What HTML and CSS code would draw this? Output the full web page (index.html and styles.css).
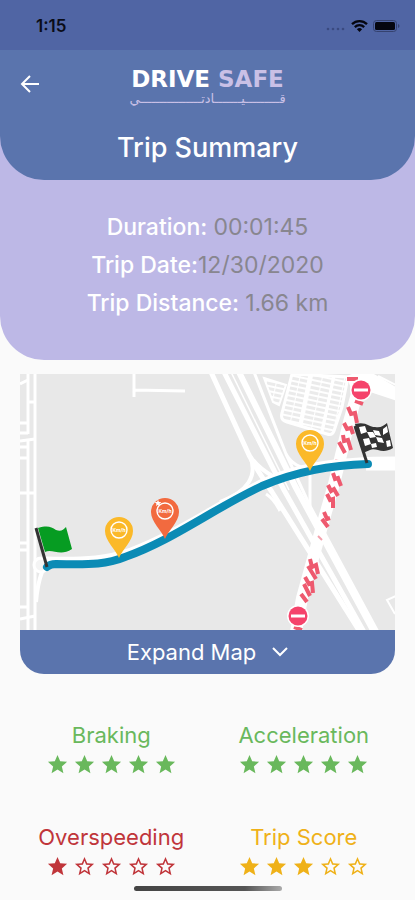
FILE: index.html
```
<!DOCTYPE html>
<html lang="en">
<head>
    <meta charset="UTF-8">
    <meta name="viewport" content="width=device-width, initial-scale=1.0">
    <title>Drive Safe - Trip Summary</title>
    <link rel="stylesheet" href="styles.css">
</head>
<body>
    <!-- Shared shapes -->
    <svg class="sprite" aria-hidden="true">
        <symbol id="star" viewBox="0 0 24 24">
            <path d="M12 17.27L18.18 21l-1.64-7.03L22 9.24l-7.19-.61L12 2 9.19 8.63 2 9.24l5.46 4.73L5.82 21z"/>
        </symbol>
        <symbol id="star-empty" viewBox="0 0 24 24">
            <path d="M22 9.24l-7.19-.62L12 2 9.19 8.63 2 9.24l5.46 4.73L5.82 21 12 17.27 18.18 21l-1.63-7.03L22 9.24zM12 15.4l-3.76 2.27 1-4.28-3.32-2.88 4.38-.38L12 6.1l1.71 4.04 4.38.38-3.32 2.88 1 4.28L12 15.4z"/>
        </symbol>
    </svg>

    <div class="summary">
        <header class="header">
            <div class="status-bar">
                <span class="time">1:15</span>
                <div class="status-icons">
                    <svg width="20" height="14" viewBox="0 0 20 14" fill="#3a4a80">
                        <circle cx="2" cy="10" r="1.3"/>
                        <circle cx="7" cy="10" r="1.3"/>
                        <circle cx="12" cy="10" r="1.3"/>
                        <circle cx="17" cy="10" r="1.3"/>
                    </svg>
                    <svg width="17" height="14" viewBox="0 0 17 14" fill="none" stroke="#05060f" stroke-width="2.3">
                        <path d="M1 5.2a10.8 10.8 0 0 1 15 0"/>
                        <path d="M3.8 8.1a6.8 6.8 0 0 1 9.4 0"/>
                        <path d="M8.5 13L5.9 10.3a3.8 3.8 0 0 1 5.2 0z" fill="#05060f" stroke="none"/>
                    </svg>
                    <svg width="27" height="14" viewBox="0 0 27 14">
                        <rect x="0.5" y="1.5" width="23" height="11" rx="3" fill="none" stroke="#35426f"/>
                        <rect x="2" y="3" width="20" height="8" rx="1.5" fill="#05060f"/>
                        <path d="M25 5v4q1.5-.6 1.5-2T25 5z" fill="#35426f"/>
                    </svg>
                </div>
            </div>
            <div class="app-bar">
                <a class="back" href="#" aria-label="Back">
                    <svg width="20" height="18" viewBox="0 0 20 18" fill="none" stroke="#fff" stroke-width="2">
                        <path d="M19 9H3M10 1L2 9l8 8"/>
                    </svg>
                </a>
                <div class="logo">
                    <div class="logo-name">DRIVE <span>SAFE</span></div>
                    <div class="logo-arabic" lang="ar" dir="rtl">قـــــــــيـــــــادتــــــــــــــــي</div>
                </div>
            </div>
            <h1>Trip Summary</h1>
        </header>
        <dl class="details">
            <div><dt>Duration: </dt><dd>00:01:45</dd></div>
            <div><dt>Trip Date:</dt><dd>12/30/2020</dd></div>
            <div><dt>Trip Distance: </dt><dd>1.66 km</dd></div>
        </dl>
    </div>

    <main>
        <section class="map-card">
            <svg class="map" viewBox="0 0 375 256" role="img" aria-label="Map of the trip route">
                <defs>
                    <pattern id="lots" width="22" height="5" patternUnits="userSpaceOnUse" patternTransform="rotate(12)">
                        <rect width="22" height="5" fill="#fff"/>
                        <rect x="1" y="1" width="9" height="3" fill="#ebebeb"/>
                        <rect x="11" y="1" width="9" height="3" fill="#ebebeb"/>
                    </pattern>
                    <symbol id="pin" viewBox="0 0 32 46">
                        <path d="M16 43C13 35 2 26 2 16a14 14 0 0 1 28 0c0 10-11 19-14 27z"/>
                        <circle cx="16" cy="15" r="8" fill="none" stroke="#fff" stroke-width="1.4"/>
                    </symbol>
                    <symbol id="closed" viewBox="0 0 22 22">
                        <circle cx="11" cy="11" r="11" fill="#fff"/>
                        <circle cx="11" cy="11" r="9.5" fill="#f5436b"/>
                        <rect x="4" y="9.5" width="14" height="3" fill="#fff"/>
                    </symbol>
                </defs>
                <rect width="375" height="256" fill="#e8e8e8"/>

                <!-- Side streets -->
                <g fill="none" stroke="#fff" stroke-width="3">
                    <path d="M8 0v60M8 66v190M15 0v256"/>
                    <path d="M0 10l8-4M8 28h7M0 49h8M0 59h8M0 67l15-2M0 73h8M0 84h8M0 119h15M0 169h8M0 176h8M0 233h8M0 245l15-3"/>
                    <path d="M114 0v23M114 16l51 1"/>
                    <path d="M376 222l-9 4 8 14" stroke-width="2"/>
                </g>
                <circle cx="21" cy="191" r="7" fill="#f4f4f4" stroke="#fff" stroke-width="3"/>
                <path d="M22 198c-3 8-5 18-6 30" fill="none" stroke="#fff" stroke-width="4"/>

                <!-- Parking lots -->
                <path d="M272 0l56 3-6 30-8 24q-2 5-7 3l-40-12q-7-2-5-9z" fill="url(#lots)" stroke="#fff" stroke-width="3"/>
                <path d="M244 4l22 7-7 20-6-3z" fill="url(#lots)" stroke="#fff" stroke-width="2"/>
                <path d="M290 0l-10 50M314 2l-12 54" stroke="#fff" stroke-width="3"/>

                <!-- Highway -->
                <g fill="none" stroke="#fff" stroke-linejoin="round">
                    <path d="M191-2l38 83q8 15 23 37l88 140" stroke-width="5"/>
                    <path d="M204-2l60 118 80 142" stroke-width="5"/>
                    <path d="M211-2l58 118" stroke-width="1.5"/>
                    <path d="M219-2l56 114 79 146" stroke-width="6"/>
                    <path d="M234-2l32 82q8 14 25 15M266 80l24 52 68 126" stroke-width="3"/>
                    <path d="M230 82q12 30-30 46M230 82q8 12 24 21" stroke-width="4"/>
                    <path d="M246 120q8 5 14 17M290 100v32" stroke-width="3"/>
                </g>

                <!-- Closed road -->
                <path d="M332 0l6 14 42 14V12L352-2z" fill="#fff"/>
                <path d="M354 0l22 13V0z" fill="#e8e8e8"/>
                <path d="M358 2l18 9" stroke="#fff" stroke-width="2"/>
                <path d="M332 0l6 16-9 32-15 62-12 42-20 72-6 34" fill="none" stroke="#fff" stroke-width="12"/>
                <g fill="none" stroke="#ee5a6f" stroke-width="4">
                    <path d="M327 5h11M335 27l8 3"/>
                    <path d="M328 33l3 7 4-1 2 10M324 49l3 6 4-1 2 6M323 61l1 6 4-1 3 10M319 68l6 11M315 87l7 2"/>
                    <path d="M313 99l2 6 3-1 3 8M308 111l3 6 3-2 4 7M307 120l3 6 3-1v9M304 138l3 7 3-1"/>
                    <path d="M302 145l6 8M290 185l2 8 4-2 2 9M288 192l8 13M285 203l4 7 3-1 1 10M284 210l6 12M281 220l6 8M274 253l8 3"/>
                </g>
                <path d="M298 162l4 4" stroke="#f4a0ac" stroke-width="2"/>

                <!-- Route -->
                <path d="M26 186c42 1 62-1 85-9 45-17 84-45 130-68 34-16 73-23 134-23" fill="none" stroke="#fff" stroke-width="7"/>
                <path d="M346 92h30" stroke="#fff" stroke-width="9"/>
                <path d="M27 193q3-3 9-3c37 1 52 0 69-7 48-17 86-47 137-71 33-14 66-21 106-22" fill="none" stroke="#0b8bb5" stroke-width="8" stroke-linecap="round"/>

                <!-- Start and finish flags -->
                <path d="M16 154l11 39" stroke="#333" stroke-width="3"/>
                <path d="M18 154c10-3 13-1 18 2 5 2 7 0 10-3l6 22c-12 8-20-1-27 3z" fill="#069c22"/>
                <path d="M335 52l12 37" stroke="#333" stroke-width="3"/>
                <path d="M335 50c11-3 14 3 20 3 6 1 8-1 12-4l6 25c-11 7-17-1-23 2l-7 3z" fill="#333"/>
                <g fill="#fff">
                    <path d="M339 53l6-1 2 6-6 2zM353 56l6 1 2 5-6-1zM363 55l4-3 1 6-5 3zM347 58l6 0 3 5-6 1zM343 65l6-1 2 6-6 2zM356 63l6 1 2 5-6-1zM351 70l5-1 1 4-5 1zM366 67l4-1 1 6-4 1z"/>
                </g>

                <!-- Events -->
                <g class="pin-label">
                    <use href="#pin" x="274" y="54" width="32" height="46" fill="#fbb929"/>
                    <text x="290" y="71">Km/h</text>
                    <use href="#pin" x="83" y="141" width="32" height="46" fill="#fbb929"/>
                    <text x="99" y="158">Km/h</text>
                    <use href="#pin" x="129" y="122" width="32" height="46" fill="#f26a3f"/>
                    <text x="145" y="139">Km/h</text>
                </g>
                <use href="#star" x="134" y="125" width="8" height="8" fill="#fff"/>
                <use href="#closed" x="330" y="5" width="22" height="22"/>
                <use href="#closed" x="267" y="231" width="22" height="22"/>
            </svg>
            <button class="expand" type="button">
                Expand Map
                <svg width="16" height="10" viewBox="0 0 16 10" fill="none" stroke="#fff" stroke-width="2">
                    <path d="M1 1l7 7 7-7"/>
                </svg>
            </button>
        </section>

        <section class="scores">
            <div class="score good">
                <h2>Braking</h2>
                <div class="stars" role="img" aria-label="5 out of 5">
                    <svg><use href="#star"/></svg>
                    <svg><use href="#star"/></svg>
                    <svg><use href="#star"/></svg>
                    <svg><use href="#star"/></svg>
                    <svg><use href="#star"/></svg>
                </div>
            </div>
            <div class="score good">
                <h2>Acceleration</h2>
                <div class="stars" role="img" aria-label="5 out of 5">
                    <svg><use href="#star"/></svg>
                    <svg><use href="#star"/></svg>
                    <svg><use href="#star"/></svg>
                    <svg><use href="#star"/></svg>
                    <svg><use href="#star"/></svg>
                </div>
            </div>
            <div class="score bad">
                <h2>Overspeeding</h2>
                <div class="stars" role="img" aria-label="1 out of 5">
                    <svg><use href="#star"/></svg>
                    <svg><use href="#star-empty"/></svg>
                    <svg><use href="#star-empty"/></svg>
                    <svg><use href="#star-empty"/></svg>
                    <svg><use href="#star-empty"/></svg>
                </div>
            </div>
            <div class="score average">
                <h2>Trip Score</h2>
                <div class="stars" role="img" aria-label="3 out of 5">
                    <svg><use href="#star"/></svg>
                    <svg><use href="#star"/></svg>
                    <svg><use href="#star"/></svg>
                    <svg><use href="#star-empty"/></svg>
                    <svg><use href="#star-empty"/></svg>
                </div>
            </div>
        </section>
    </main>

    <div class="home-indicator"></div>
</body>
</html>
```
FILE: styles.css
```
* {
    margin: 0;
    padding: 0;
    box-sizing: border-box;
}

body {
    font-family: Inter, "Open Sans", sans-serif;
    background: #fafafa;
    min-height: 100vh;
}

svg {
    display: block;
}

.sprite {
    position: absolute;
    width: 0;
    height: 0;
}

/* Header */
.summary {
    background: #bdb8e6;
    border-radius: 0 0 44px 44px;
}

.header {
    background: #5a74ad;
    border-radius: 0 0 44px 44px;
    color: #fff;
    text-align: center;
    padding-bottom: 8px;
}

.status-bar {
    display: flex;
    align-items: center;
    justify-content: space-between;
    height: 50px;
    padding: 2px 15px 0 36px;
    background: #5065a4;
}

.time {
    font-size: 17px;
    font-weight: 600;
    color: #0a0c18;
}

.status-icons {
    display: flex;
    align-items: center;
    gap: 5px;
}

.app-bar {
    display: grid;
    grid-template-columns: 32px 1fr 32px;
    align-items: center;
    height: 74px;
    padding: 0 20px;
}

.back {
    padding-bottom: 6px;
}

.logo {
    display: flex;
    flex-direction: column;
    align-items: center;
}

.logo-name {
    font: bold 23px/24px "DejaVu Sans", sans-serif;
}

.logo-name span {
    color: #c9c0e6;
}

.logo-arabic {
    font: 13px/16px "DejaVu Sans", sans-serif;
    color: #c9c0e6;
    white-space: nowrap;
}

h1 {
    font-size: 27px;
    font-weight: 500;
    line-height: 48px;
}

.details {
    padding: 28px 0 38px;
    font-size: 23px;
    line-height: 38px;
    text-align: center;
}

.details dt,
.details dd {
    display: inline;
    white-space: pre;
}

.details dt {
    color: #fff;
    font-weight: 500;
}

.details dd {
    color: #88868f;
}

/* Map */
.map-card {
    margin: 14px 20px 0;
    border-radius: 0 0 24px 24px;
    overflow: hidden;
}

.map {
    width: 100%;
    height: auto;
}

.pin-label text {
    font-size: 5px;
    font-weight: 700;
    text-anchor: middle;
    fill: #fff;
}

.expand {
    display: flex;
    align-items: center;
    justify-content: center;
    gap: 16px;
    width: 100%;
    height: 44px;
    border: 0;
    background: #5a74ad;
    color: #fff;
    font: 22px/28px Inter, "Open Sans", sans-serif;
    cursor: pointer;
}

/* Scores */
.scores {
    display: grid;
    grid-template-columns: 1fr 1fr;
    row-gap: 46px;
    padding: 46px 15px 18px;
}

.score {
    display: flex;
    flex-direction: column;
    align-items: center;
}

.score h2 {
    font-size: 22px;
    font-weight: 400;
    line-height: 30px;
}

.stars {
    display: flex;
    gap: 4px;
    margin-top: 3px;
}

.stars svg {
    width: 23px;
    height: 23px;
    fill: currentColor;
}

.good {
    color: #69b85c;
}

.bad {
    color: #c0353a;
}

.average {
    color: #efb118;
}

.home-indicator {
    position: fixed;
    bottom: 9px;
    left: 50%;
    width: 148px;
    height: 5px;
    border-radius: 3px;
    background: linear-gradient(90deg, #444, #555 75%, #aaa);
    transform: translateX(-50%);
}
```
